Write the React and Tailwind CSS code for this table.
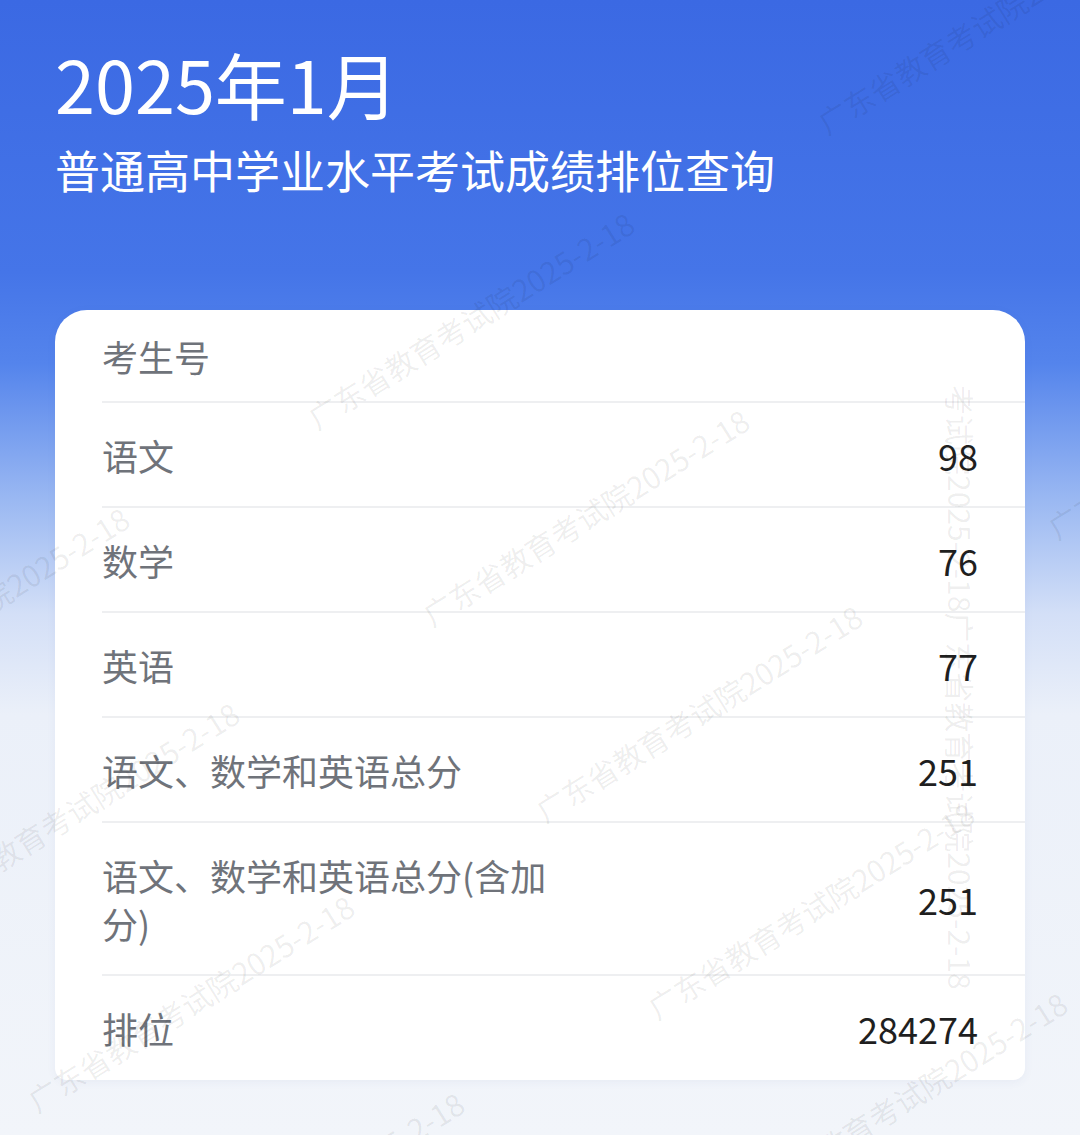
import React from 'react'

const rows = [
    { label: '考生号', value: '', h: 'h-[93px]' },
    { label: '语文', value: '98', h: 'h-[105px]' },
    { label: '数学', value: '76', h: 'h-[105px]' },
    { label: '英语', value: '77', h: 'h-[105px]' },
    { label: '语文、数学和英语总分', value: '251', h: 'h-[105px]' },
    { label: '语文、数学和英语总分(含加分)', value: '251', h: 'h-[153px]' },
]

const mark = '广东省教育考试院2025-2-18'

// diagonal watermarks, positioned by their lower-left corner
const marks = [
    'left-[320px] top-[400px]',
    'left-[435px] top-[597px]',
    'left-[548px] top-[793px]',
    'left-[660px] top-[990px]',
    'left-[-185px] top-[695px]',
    'left-[-75px] top-[890px]',
    'left-[40px] top-[1083px]',
    'left-[150px] top-[1280px]',
    'left-[753px] top-[1180px]',
    'left-[830px] top-[105px]',
    'left-[1060px] top-[510px]',
]

const App = () => {
    return (
        <div className="relative min-h-[1135px] w-full overflow-hidden bg-[linear-gradient(180deg,#3b69e3_0%,#4575e8_24%,#5484ec_32%,#9ab8f2_44%,#d3dff7_54%,#ebf0f9_63%,#f2f5fa_100%)] font-['Noto_Sans_CJK_SC','Noto_Sans',sans-serif]">
            <div className="px-[55px] pt-[47px] text-white">
                <h1 className="text-[72px] leading-none">2025年1月</h1>
                <p className="mt-[28px] text-[45px] leading-none">普通高中学业水平考试成绩排位查询</p>
            </div>

            <div className="mx-[55px] mt-[118px] flex h-[770px] flex-col rounded-t-[32px] rounded-b-[12px] bg-white shadow-[0_2px_10px_rgba(60,90,150,0.06)]">
                {rows.map((r) => (
                    <div key={r.label} className={`${r.h} ml-[47px] flex items-center justify-between border-b-2 border-[#eeeff1] pr-[47px]`}>
                        <span className="max-w-[460px] text-[36px] leading-[48px] text-[#6f737a]">{r.label}</span>
                        <span className="text-[36px] leading-[48px] text-[#1f1f1f]">{r.value}</span>
                    </div>
                ))}
                <div className="ml-[47px] flex flex-1 items-center justify-between pr-[47px]">
                    <span className="text-[36px] leading-[48px] text-[#6f737a]">排位</span>
                    <span className="text-[36px] leading-[48px] text-[#1f1f1f]">284274</span>
                </div>
            </div>

            {/* watermark overlay */}
            <div className="pointer-events-none absolute inset-0">
                {marks.map((m) => (
                    <span key={m} className={`${m} absolute origin-bottom-left -rotate-[32deg] whitespace-nowrap text-[30px] leading-[35px] text-black/[0.07]`}>
                        {mark}
                    </span>
                ))}
                <span className="absolute left-[978px] top-[385px] origin-top-left rotate-90 whitespace-nowrap text-[30px] leading-[35px] text-black/[0.07]">
                    考试院2025-2-18广东省教育考试院2025-2-18
                </span>
            </div>
        </div>
    )
}

export default App
